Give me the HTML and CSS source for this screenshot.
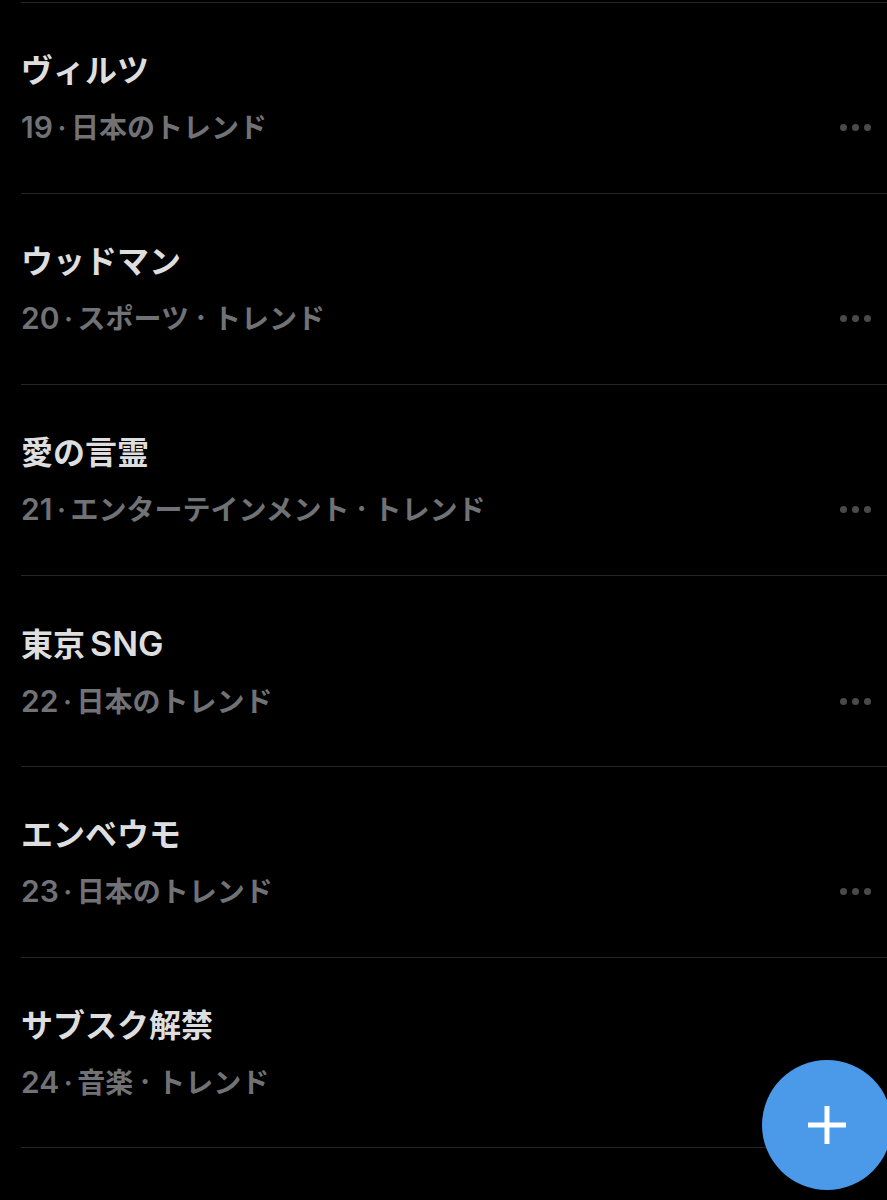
FILE: index.html
```html
<!DOCTYPE html>
<html lang="ja">

<head>
    <meta charset="UTF-8">
    <meta name="viewport" content="width=device-width, initial-scale=1.0">
    <title>トレンド</title>
    <link rel="stylesheet" href="styles.css">
</head>

<body>
    <ul class="trendList">
        <li class="trend">
            <h2 class="trendName">ヴィルツ</h2>
            <p class="trendMeta"><span class="rank">19</span><span class="rankDot">·</span><span>日本のトレンド</span></p>
            <button class="moreButton" aria-label="もっと見る"><span class="dot"></span><span class="dot"></span><span class="dot"></span></button>
        </li>
        <li class="trend">
            <h2 class="trendName">ウッドマン</h2>
            <p class="trendMeta"><span class="rank">20</span><span class="rankDot">·</span><span>スポーツ</span><span class="genreDot">·</span><span>トレンド</span></p>
            <button class="moreButton" aria-label="もっと見る"><span class="dot"></span><span class="dot"></span><span class="dot"></span></button>
        </li>
        <li class="trend">
            <h2 class="trendName">愛の言霊</h2>
            <p class="trendMeta"><span class="rank">21</span><span class="rankDot">·</span><span>エンターテインメント</span><span class="genreDot">·</span><span>トレンド</span></p>
            <button class="moreButton" aria-label="もっと見る"><span class="dot"></span><span class="dot"></span><span class="dot"></span></button>
        </li>
        <li class="trend">
            <h2 class="trendName">東京<span class="latin">SNG</span></h2>
            <p class="trendMeta"><span class="rank">22</span><span class="rankDot">·</span><span>日本のトレンド</span></p>
            <button class="moreButton" aria-label="もっと見る"><span class="dot"></span><span class="dot"></span><span class="dot"></span></button>
        </li>
        <li class="trend">
            <h2 class="trendName">エンベウモ</h2>
            <p class="trendMeta"><span class="rank">23</span><span class="rankDot">·</span><span>日本のトレンド</span></p>
            <button class="moreButton" aria-label="もっと見る"><span class="dot"></span><span class="dot"></span><span class="dot"></span></button>
        </li>
        <li class="trend lastTrend">
            <h2 class="trendName">サブスク解禁</h2>
            <p class="trendMeta"><span class="rank">24</span><span class="rankDot">·</span><span>音楽</span><span class="genreDot">·</span><span>トレンド</span></p>
        </li>
    </ul>

    <button class="postButton" aria-label="ポストする">
        <svg width="38" height="38" viewBox="0 0 38 38" aria-hidden="true">
            <path d="M19 0V38M0 19H38" stroke="#fff" stroke-width="5"/>
        </svg>
    </button>
</body>

</html>
```

FILE: styles.css
```css
body {
    margin: 0;
    overflow-x: hidden;
    background-color: #000;
    font-family: Inter, 'Noto Sans CJK JP', sans-serif;
}

.trendList {
    list-style: none;
    margin: 0;
    padding: 2px 0 0 21px;
}

.trend {
    display: grid;
    grid-template-columns: 1fr auto;
    align-content: start;
    row-gap: 8px;
    box-sizing: border-box;
    min-height: 191px;
    padding: 44px 12px 0 0;
    border-top: 1px solid #262628;
}

.lastTrend {
    border-bottom: 1px solid #262628;
}

.trendName {
    grid-column: 1 / -1;
    margin: 0;
    color: #dedede;
    font-size: 32px;
    line-height: 48px;
    font-weight: 600;
}

.latin {
    margin-left: 5px;
    font-size: 34px;
}

.trendMeta {
    display: flex;
    align-items: baseline;
    margin: 0;
    color: #707276;
    font-size: 28px;
    line-height: 48px;
    font-weight: 600;
}

.rank {
    font-size: 30px;
}

.rankDot {
    width: 18px;
    font-size: 28px;
    text-align: center;
}

.genreDot {
    width: 24px;
    font-size: 32px;
    text-align: center;
}

.moreButton {
    display: flex;
    align-items: center;
    gap: 5px;
    padding: 0 4px;
    border: none;
    background: none;
    cursor: pointer;
}

.dot {
    width: 7px;
    height: 7px;
    border-radius: 50%;
    background-color: #4a4a4c;
}

.postButton {
    position: fixed;
    right: -5px;
    bottom: 10px;
    display: flex;
    align-items: center;
    justify-content: center;
    width: 130px;
    height: 130px;
    padding: 0;
    border: none;
    border-radius: 50%;
    background-color: #4b99e9;
    cursor: pointer;
}
```
